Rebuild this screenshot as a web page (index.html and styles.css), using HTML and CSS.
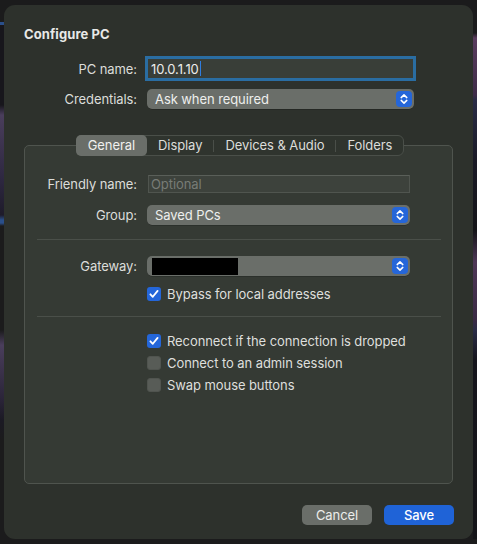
FILE: index.html
```html
<!DOCTYPE html>
<html lang="en">
<head>
<meta charset="utf-8">
<title>Configure PC</title>
<link rel="stylesheet" href="styles.css">
</head>
<body>
<div class="dialog">
  <div class="title">Configure PC</div>

  <div class="form top-form">
    <label class="label">PC name:</label>
    <div class="text-field focused"><span class="value">10.0.1.10</span><span class="caret"></span></div>

    <label class="label">Credentials:</label>
    <div class="popup">
      <span class="popup-text">Ask when required</span>
      <span class="stepper"><svg width="16" height="16" viewBox="0 0 16 16"><path d="M5.2 6.6 8 3.9l2.8 2.7M5.2 9.4 8 12.1l2.8-2.7" fill="none" stroke="#fff" stroke-width="1.5" stroke-linecap="round" stroke-linejoin="round"/></svg></span>
    </div>
  </div>

  <div class="tabs">
    <span class="tab active">General</span>
    <span class="tab">Display</span>
    <span class="tab-sep"></span>
    <span class="tab">Devices &amp; Audio</span>
    <span class="tab-sep"></span>
    <span class="tab">Folders</span>
  </div>

  <div class="group">
    <div class="form inner-form">
      <label class="label">Friendly name:</label>
      <div class="text-field plain"><span class="placeholder">Optional</span></div>

      <label class="label">Group:</label>
      <div class="popup">
        <span class="popup-text">Saved PCs</span>
        <span class="stepper"><svg width="16" height="16" viewBox="0 0 16 16"><path d="M5.2 6.6 8 3.9l2.8 2.7M5.2 9.4 8 12.1l2.8-2.7" fill="none" stroke="#fff" stroke-width="1.5" stroke-linecap="round" stroke-linejoin="round"/></svg></span>
      </div>
    </div>

    <div class="separator sep-1"></div>

    <div class="form inner-form">
      <label class="label">Gateway:</label>
      <div class="popup">
        <span class="redacted"></span>
        <span class="stepper"><svg width="16" height="16" viewBox="0 0 16 16"><path d="M5.2 6.6 8 3.9l2.8 2.7M5.2 9.4 8 12.1l2.8-2.7" fill="none" stroke="#fff" stroke-width="1.5" stroke-linecap="round" stroke-linejoin="round"/></svg></span>
      </div>

      <span></span>
      <div class="check-row bypass">
        <span class="checkbox checked"><svg width="14" height="14" viewBox="0 0 14 14"><path d="M3.4 7.3 5.8 9.8 10.6 3.9" fill="none" stroke="#fff" stroke-width="1.8" stroke-linecap="round" stroke-linejoin="round"/></svg></span>
        <span>Bypass for local addresses</span>
      </div>
    </div>

    <div class="separator sep-2"></div>

    <div class="checks">
      <div class="check-row">
        <span class="checkbox checked"><svg width="14" height="14" viewBox="0 0 14 14"><path d="M3.4 7.3 5.8 9.8 10.6 3.9" fill="none" stroke="#fff" stroke-width="1.8" stroke-linecap="round" stroke-linejoin="round"/></svg></span>
        <span>Reconnect if the connection is dropped</span>
      </div>
      <div class="check-row">
        <span class="checkbox"></span>
        <span>Connect to an admin session</span>
      </div>
      <div class="check-row">
        <span class="checkbox"></span>
        <span>Swap mouse buttons</span>
      </div>
    </div>
  </div>

  <div class="buttons">
    <button class="btn cancel">Cancel</button>
    <button class="btn save">Save</button>
  </div>
</div>
</body>
</html>
```

FILE: styles.css
```css
html {
  background:
    linear-gradient(to bottom, #1b1b1c 0, #1b1b1c 22px, #2a4f8a 22px, #2a4f8a 25px, #17161c 25px, #17161c 105px, #4a3e5c 115px, #2d2740 180px, #1e1b2a 215px, #2a4f8a 220px, #2a4f8a 223px, #1b1b1c 226px, #1b1b1c 330px, #4a3e5c 345px, #2a2438 400px, #1b1a24 420px, #1b1b1c 440px) left top / 4px 100% no-repeat,
    linear-gradient(to bottom, #1b1b1c 0, #1b1b1c 33px, #5a3c5e 38px, #3e2c48 95px, #2a2c46 100px, #1a1a26 160px, #141418 230px, #4e3756 262px, #3a2a44 320px, #2a2c46 330px, #15151c 360px, #141418 544px) right top / 4px 100% no-repeat,
    #1b1b1c;
}

body {
  margin: 0;
  font-family: "Inter", "Liberation Sans", sans-serif;
  font-size: 13px;
  letter-spacing: -0.08px;
  color: #dedfdd;
}

.dialog {
  box-sizing: border-box;
  margin: 5px 0 0 4px;
  width: 469px;
  height: 534px;
  background: #2d312c;
  border-radius: 11px;
  padding: 21px 20px 14px 20px;
  display: flex;
  flex-direction: column;
}

.title {
  font-weight: 700;
  font-size: 13px;
  line-height: 16px;
  color: #e8e9e7;
  letter-spacing: 0.1px;
}

.form {
  display: grid;
  align-items: center;
  column-gap: 10px;
}

.top-form {
  margin-top: 14px;
  grid-template-columns: 113px 267px;
  grid-template-rows: 25px 20px;
  row-gap: 8px;
}

.label {
  text-align: right;
  line-height: 16px;
  color: #dcddda;
}

.text-field {
  box-sizing: border-box;
  display: flex;
  align-items: center;
  line-height: 16px;
}

.text-field.focused {
  margin: 0 1px;
  height: 19px;
  background: #393e38;
  box-shadow: 0 0 0 3px #2a6da2;
  padding-left: 3px;
  color: #ecedeb;
}

.caret {
  display: inline-block;
  width: 1px;
  height: 15px;
  background: #2f7de0;
  margin-left: 1px;
}

.text-field.plain {
  margin-left: 1px;
  height: 18px;
  background: #3d423c;
  border: 1px solid #50554f;
  border-top-color: #5a5f59;
  padding-left: 2px;
}

.placeholder {
  color: #787c76;
}

.popup {
  box-sizing: border-box;
  height: 20px;
  background: #6a6e69;
  border-radius: 5px;
  display: flex;
  align-items: center;
  padding: 0 2px 0 8px;
  box-shadow: 0 0.5px 0 rgba(0,0,0,0.35);
}

.popup-text {
  flex: 1;
  line-height: 16px;
  color: #eeefed;
}

.stepper {
  margin-left: auto;
  width: 16px;
  height: 16px;
  border-radius: 4px;
  background: #2566d9;
  display: flex;
}

.redacted {
  width: 86px;
  height: 17px;
  background: #000;
  margin-left: -3px;
}

.tabs {
  align-self: center;
  margin-top: 26px;
  margin-bottom: -11px;
  margin-left: 3px;
  position: relative;
  z-index: 1;
  display: flex;
  align-items: center;
  height: 21px;
  box-sizing: border-box;
  border: 1px solid #4a4f49;
  border-radius: 6px;
  background: #2f342e;
}

.tab {
  box-sizing: border-box;
  height: 20px;
  line-height: 19px;
  padding: 0 11px;
  border-radius: 5px;
  color: #dcddda;
}

.tab.active {
  background: #6a6e69;
  padding: 0 12px;
  margin: -1px 0 0 -1px;
  height: 21px;
  line-height: 21px;
  color: #f0f0ee;
}

.tab-sep {
  width: 1px;
  height: 12px;
  background: #4a4f49;
}

.group {
  flex: 1;
  box-sizing: border-box;
  border: 1px solid #4f544e;
  border-radius: 5px;
  background: #353a34;
  padding-top: 29px;
}

.inner-form {
  grid-template-columns: 112px 263px;
}

.group .form:first-child {
  grid-template-rows: 18px 20px;
  row-gap: 12px;
}

.separator {
  height: 1px;
  background: #4a4f49;
  margin: 0 11px 0 12px;
}

.sep-1 {
  margin-top: 14px;
  margin-bottom: 16px;
}

.sep-1 + .form {
  grid-template-rows: 20px 16px;
  row-gap: 10px;
}

.sep-2 {
  margin-top: 14px;
  margin-bottom: 16px;
}

.check-row {
  display: flex;
  align-items: center;
  height: 16px;
  line-height: 16px;
  gap: 6px;
  color: #dedfdc;
}

.checks {
  display: flex;
  flex-direction: column;
  gap: 6px;
  padding-left: 122px;
}

.checkbox {
  box-sizing: border-box;
  width: 14px;
  height: 14px;
  border-radius: 3px;
  background: #585c57;
  border: 1px solid #50544f;
  display: flex;
  flex-shrink: 0;
}

.checkbox.checked {
  background: #2466d9;
  border: none;
}

.buttons {
  margin-top: 21px;
  display: flex;
  justify-content: flex-end;
  gap: 12px;
  margin-right: -1px;
}

.btn {
  font-family: inherit;
  font-size: 13px;
  letter-spacing: inherit;
  width: 70px;
  height: 20px;
  border: none;
  border-radius: 5px;
  padding: 0;
  line-height: 20px;
}

.btn.cancel {
  background: #6a6e69;
  color: #ecedeb;
}

.btn.save {
  background: #1f63d7;
  color: #fff;
  font-weight: 500;
}
```
